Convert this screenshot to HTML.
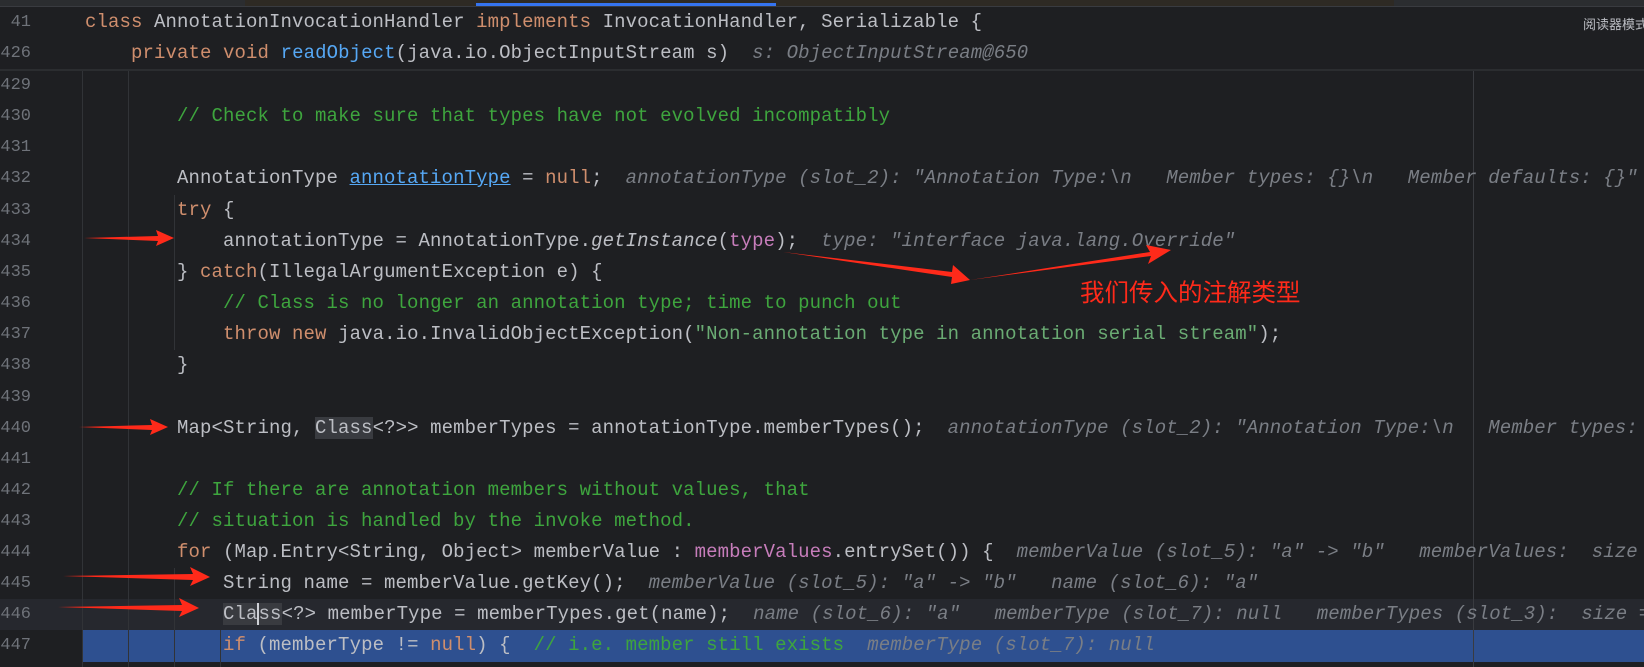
<!DOCTYPE html>
<html><head><meta charset="utf-8">
<style>
html,body{margin:0;padding:0;width:1644px;height:667px;overflow:hidden;background:#1e1f22}
body{position:relative;font-family:"Liberation Mono","DejaVu Sans Mono",monospace;font-size:19px;color:#bcbec4}
.row{position:absolute;left:0;width:1644px;height:31px;line-height:31px}
.n{position:absolute;left:0;width:31px;text-align:right;color:#6f737a;font-size:17px;overflow:hidden}
.c{position:absolute;left:85px;white-space:pre;letter-spacing:0.1px}
.k{color:#cf8e6d}.m{color:#56a8f5}.g{color:#3ea53e}.s{color:#6aab73}.p{color:#c77dbb}
.h{color:#7a7e85;font-style:italic}.i{font-style:italic}
.u{color:#56a8f5;text-decoration:underline}
.box{background:#393b40}
.gl{position:absolute;width:1px;background:#313337}
</style></head><body>
<div style="position:absolute;left:0;top:0;width:1644px;height:6px;background:#2b2d30"></div>
<div style="position:absolute;left:245px;top:0;width:1149px;height:6px;background:#2e2a24"></div>
<div style="position:absolute;left:476px;top:3px;width:300px;height:4px;background:#3574f0"></div>
<div style="position:absolute;left:0;top:6px;width:1644px;height:1px;background:#393b40"></div>
<div style="position:absolute;left:0;top:69px;width:1644px;height:2px;background:#2b2d30"></div>
<div style="position:absolute;left:1583px;top:14px;font-family:'Liberation Sans','Noto Sans CJK SC',sans-serif;font-size:13px;color:#bcbec4;white-space:nowrap">阅读器模式</div>

<!-- current line & highlight -->
<div style="position:absolute;left:0;top:599px;width:1644px;height:31px;background:#26282e"></div>
<div style="position:absolute;left:83px;top:630px;width:1561px;height:32px;background:#2e5090"></div>

<!-- guides -->
<div class="gl" style="left:82px;top:71px;height:596px"></div>
<div class="gl" style="left:128px;top:71px;height:596px"></div>
<div class="gl" style="left:174px;top:195px;height:155px"></div>
<div class="gl" style="left:174px;top:568px;height:99px"></div>
<div class="gl" style="left:220px;top:630px;height:37px"></div>
<div class="gl" style="left:1473px;top:71px;height:596px;background:#393b40"></div>

<div class="row" style="top:7px"><span class="n">41</span><span class="c"><span class="k">class</span> AnnotationInvocationHandler <span class="k">implements</span> InvocationHandler, Serializable {</span></div>
<div class="row" style="top:38px"><span class="n">426</span><span class="c">    <span class="k">private void</span> <span class="m">readObject</span>(java.io.ObjectInputStream s)  <span class="h">s: ObjectInputStream@650</span></span></div>

<div class="row" style="top:70px"><span class="n">429</span></div>
<div class="row" style="top:101px"><span class="n">430</span><span class="c">        <span class="g">// Check to make sure that types have not evolved incompatibly</span></span></div>
<div class="row" style="top:132px"><span class="n">431</span></div>
<div class="row" style="top:163px"><span class="n">432</span><span class="c">        AnnotationType <span class="u">annotationType</span> = <span class="k">null</span>;  <span class="h">annotationType (slot_2): "Annotation Type:\n   Member types: {}\n   Member defaults: {}"</span></span></div>
<div class="row" style="top:195px"><span class="n">433</span><span class="c">        <span class="k">try</span> {</span></div>
<div class="row" style="top:226px"><span class="n">434</span><span class="c">            annotationType = AnnotationType.<span class="i">getInstance</span>(<span class="p">type</span>);  <span class="h">type: "interface java.lang.Override"</span></span></div>
<div class="row" style="top:257px"><span class="n">435</span><span class="c">        } <span class="k">catch</span>(IllegalArgumentException e) {</span></div>
<div class="row" style="top:288px"><span class="n">436</span><span class="c">            <span class="g">// Class is no longer an annotation type; time to punch out</span></span></div>
<div class="row" style="top:319px"><span class="n">437</span><span class="c">            <span class="k">throw new</span> java.io.InvalidObjectException(<span class="s">"Non-annotation type in annotation serial stream"</span>);</span></div>
<div class="row" style="top:350px"><span class="n">438</span><span class="c">        }</span></div>
<div class="row" style="top:382px"><span class="n">439</span></div>
<div class="row" style="top:413px"><span class="n">440</span><span class="c">        Map&lt;String, <span class="box">Class</span>&lt;?&gt;&gt; memberTypes = annotationType.memberTypes();  <span class="h">annotationType (slot_2): "Annotation Type:\n   Member types: {}\n</span></span></div>
<div class="row" style="top:444px"><span class="n">441</span></div>
<div class="row" style="top:475px"><span class="n">442</span><span class="c">        <span class="g">// If there are annotation members without values, that</span></span></div>
<div class="row" style="top:506px"><span class="n">443</span><span class="c">        <span class="g">// situation is handled by the invoke method.</span></span></div>
<div class="row" style="top:537px"><span class="n">444</span><span class="c">        <span class="k">for</span> (Map.Entry&lt;String, Object&gt; memberValue : <span class="p">memberValues</span>.entrySet()) {  <span class="h">memberValue (slot_5): "a" -&gt; "b"   memberValues:  size = 1</span></span></div>
<div class="row" style="top:568px"><span class="n">445</span><span class="c">            String name = memberValue.getKey();  <span class="h">memberValue (slot_5): "a" -&gt; "b"   name (slot_6): "a"</span></span></div>
<div class="row" style="top:599px"><span class="n">446</span><span class="c">            <span class="box">Cla<span style="border-left:2px solid #ced0d6;margin-left:-1px"></span>ss</span>&lt;?&gt; memberType = memberTypes.get(name);  <span class="h">name (slot_6): "a"   memberType (slot_7): null   memberTypes (slot_3):  size = 1</span></span></div>
<div class="row" style="top:630px"><span class="n">447</span><span class="c">            <span class="k">if</span> (memberType != <span class="k">null</span>) {  <span class="g">// i.e. member still exists</span>  <span class="h">memberType (slot_7): null</span></span></div>

<svg style="position:absolute;left:0;top:0" width="1644" height="667">
<g fill="#ff2a1a" stroke="none">
<polygon points="84,238 158,236 156,230 174,238 156,246 158,241"/>
<polygon points="79,427 152,425 150,419 168,427 150,435 152,430"/>
<polygon points="63,576 193,574 190,567 210,577 190,586 193,580"/>
<polygon points="58,607 182,605 179,598 199,608 179,617 182,611"/>
<polygon points="783,252 952,272 953,265 970,280 951,284 952,277"/>
<polygon points="970,280 1151,256 1148,264 1171,250 1146,245 1150,252"/>
</g>
</svg>
<div style="position:absolute;left:1080px;top:277px;font-family:'Noto Sans CJK SC',sans-serif;font-size:24.5px;line-height:30px;color:#ff2a1a;white-space:nowrap">我们传入的注解类型</div>
</body></html>
